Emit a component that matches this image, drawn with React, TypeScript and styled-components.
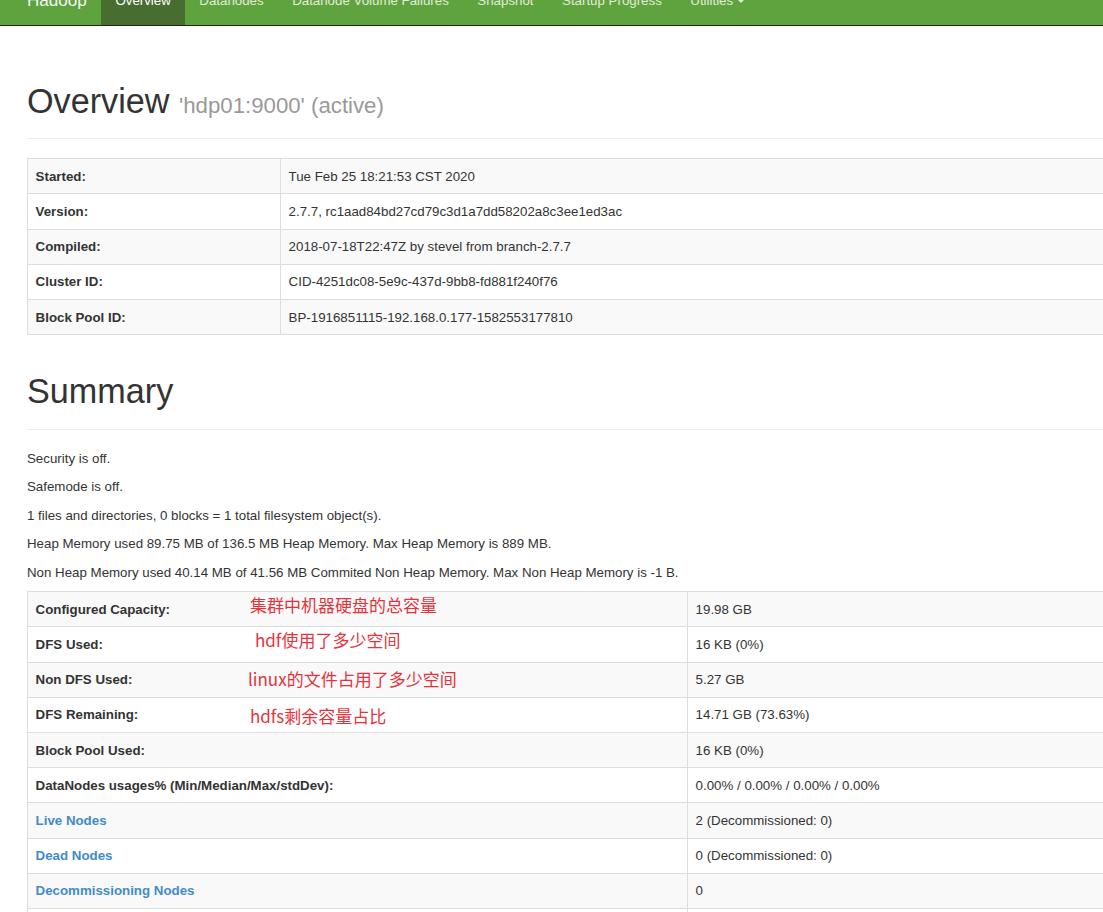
import React from "react";
import styled, { createGlobalStyle } from "styled-components";

const GlobalStyle = createGlobalStyle`
  html, body {
    margin: 0;
    padding: 0;
    background: #fff;
    overflow: hidden;
  }
  body {
    font-family: "Liberation Sans", Arial, "Noto Sans CJK SC", sans-serif;
    font-size: 13.3px;
    line-height: 19px;
    color: #333;
  }
`;

const Navbar = styled.header`
  margin-top: -23px;
  height: 47.5px;
  background-color: #5fa33e;
  border-bottom: 1px solid #1b2a12;
  display: flex;
  align-items: stretch;
  padding-left: 12.75px;
`;

const Brand = styled.a`
  display: flex;
  align-items: center;
  padding: 0 14.25px;
  font-size: 17.1px;
  color: #f4f4f4;
  text-decoration: none;
`;

const NavList = styled.ul`
  display: flex;
  list-style: none;
  margin: 0;
  padding: 0;
`;

const NavItem = styled.li<{ $active?: boolean }>`
  display: flex;
  align-items: center;
  padding: 0 14.25px;
  color: ${(p) => (p.$active ? "#fff" : "#e2ecd9")};
  background-color: ${(p) => (p.$active ? "#486d31" : "transparent")};
`;

const Caret = styled.span`
  display: inline-block;
  width: 0;
  height: 0;
  margin-left: 4px;
  vertical-align: middle;
  border-top: 4px solid #e2ecd9;
  border-left: 4px solid transparent;
  border-right: 4px solid transparent;
`;

const Container = styled.main`
  padding: 19px 0 0 27px;
  width: 1083px;
`;

const PageHeader = styled.div`
  margin: 38px 0 19px;
  padding-bottom: 8.55px;
  border-bottom: 1px solid #eee;
`;

const Title = styled.h1`
  margin: 0 0 9.5px;
  font-size: 34.2px;
  line-height: 1.1;
  font-weight: 500;
  color: #333;
`;

const SubTitle = styled.small`
  font-size: 65%;
  font-weight: normal;
  color: #999;
`;

const Para = styled.p`
  margin: 0 0 9.5px;
`;

const Table = styled.table`
  width: 100%;
  table-layout: fixed;
  border-collapse: collapse;
  border-spacing: 0;
  border: 1px solid #ddd;
  margin-bottom: 19px;

  tbody tr:nth-child(odd) {
    background-color: #f9f9f9;
  }
`;

const HeadCell = styled.th<{ $width: number }>`
  position: relative;
  box-sizing: border-box;
  width: ${(p) => p.$width}px;
  padding: 7.6px;
  text-align: left;
  font-weight: bold;
  border: 1px solid #ddd;
  vertical-align: top;
`;

const Cell = styled.td`
  padding: 7.6px;
  border: 1px solid #ddd;
  vertical-align: top;
`;

const NodeLink = styled.a`
  color: #428bca;
  text-decoration: none;
`;

const Note = styled.span<{ $left: number; $top: number }>`
  position: absolute;
  left: ${(p) => p.$left}px;
  top: ${(p) => p.$top}px;
  font-family: "Noto Sans CJK SC", "Liberation Sans", sans-serif;
  font-size: 17px;
  line-height: 24px;
  font-weight: normal;
  color: #e5333b;
  white-space: nowrap;
`;

const navItems = [
  "Overview",
  "Datanodes",
  "Datanode Volume Failures",
  "Snapshot",
  "Startup Progress",
];

const overviewRows = [
  ["Started:", "Tue Feb 25 18:21:53 CST 2020"],
  ["Version:", "2.7.7, rc1aad84bd27cd79c3d1a7dd58202a8c3ee1ed3ac"],
  ["Compiled:", "2018-07-18T22:47Z by stevel from branch-2.7.7"],
  ["Cluster ID:", "CID-4251dc08-5e9c-437d-9bb8-fd881f240f76"],
  ["Block Pool ID:", "BP-1916851115-192.168.0.177-1582553177810"],
];

type SummaryRow = {
  label: string;
  value: string;
  link?: boolean;
  note?: { text: string; left: number; top: number };
};

const summaryRows: SummaryRow[] = [
  {
    label: "Configured Capacity:",
    value: "19.98 GB",
    note: { text: "集群中机器硬盘的总容量", left: 222, top: 1 },
  },
  {
    label: "DFS Used:",
    value: "16 KB (0%)",
    note: { text: "hdf使用了多少空间", left: 227, top: 1 },
  },
  {
    label: "Non DFS Used:",
    value: "5.27 GB",
    note: { text: "linux的文件占用了多少空间", left: 220, top: 4 },
  },
  {
    label: "DFS Remaining:",
    value: "14.71 GB (73.63%)",
    note: { text: "hdfs剩余容量占比", left: 222, top: 6 },
  },
  { label: "Block Pool Used:", value: "16 KB (0%)" },
  {
    label: "DataNodes usages% (Min/Median/Max/stdDev):",
    value: "0.00% / 0.00% / 0.00% / 0.00%",
  },
  { label: "Live Nodes", value: "2 (Decommissioned: 0)", link: true },
  { label: "Dead Nodes", value: "0 (Decommissioned: 0)", link: true },
  { label: "Decommissioning Nodes", value: "0", link: true },
  { label: "Total Datanode Volume Failures", value: "0 (0 B)", link: true },
];

const summaryLines = [
  "Security is off.",
  "Safemode is off.",
  "1 files and directories, 0 blocks = 1 total filesystem object(s).",
  "Heap Memory used 89.75 MB of 136.5 MB Heap Memory. Max Heap Memory is 889 MB.",
  "Non Heap Memory used 40.14 MB of 41.56 MB Commited Non Heap Memory. Max Non Heap Memory is -1 B.",
];

export default function App() {
  return (
    <>
      <GlobalStyle />
      <Navbar>
        <Brand href="#">Hadoop</Brand>
        <NavList>
          {navItems.map((item) => (
            <NavItem key={item} $active={item === "Overview"}>
              {item}
            </NavItem>
          ))}
          <NavItem>
            Utilities
            <Caret />
          </NavItem>
        </NavList>
      </Navbar>

      <Container>
        <PageHeader>
          <Title>
            Overview <SubTitle>'hdp01:9000' (active)</SubTitle>
          </Title>
        </PageHeader>

        <Table>
          <tbody>
            {overviewRows.map(([label, value]) => (
              <tr key={label}>
                <HeadCell $width={253}>{label}</HeadCell>
                <Cell>{value}</Cell>
              </tr>
            ))}
          </tbody>
        </Table>

        <PageHeader>
          <Title>Summary</Title>
        </PageHeader>

        {summaryLines.map((line) => (
          <Para key={line}>{line}</Para>
        ))}

        <Table>
          <tbody>
            {summaryRows.map((row) => (
              <tr key={row.label}>
                <HeadCell $width={660}>
                  {row.link ? <NodeLink href="#">{row.label}</NodeLink> : row.label}
                  {row.note && (
                    <Note $left={row.note.left} $top={row.note.top}>
                      {row.note.text}
                    </Note>
                  )}
                </HeadCell>
                <Cell>{row.value}</Cell>
              </tr>
            ))}
          </tbody>
        </Table>
      </Container>
    </>
  );
}
